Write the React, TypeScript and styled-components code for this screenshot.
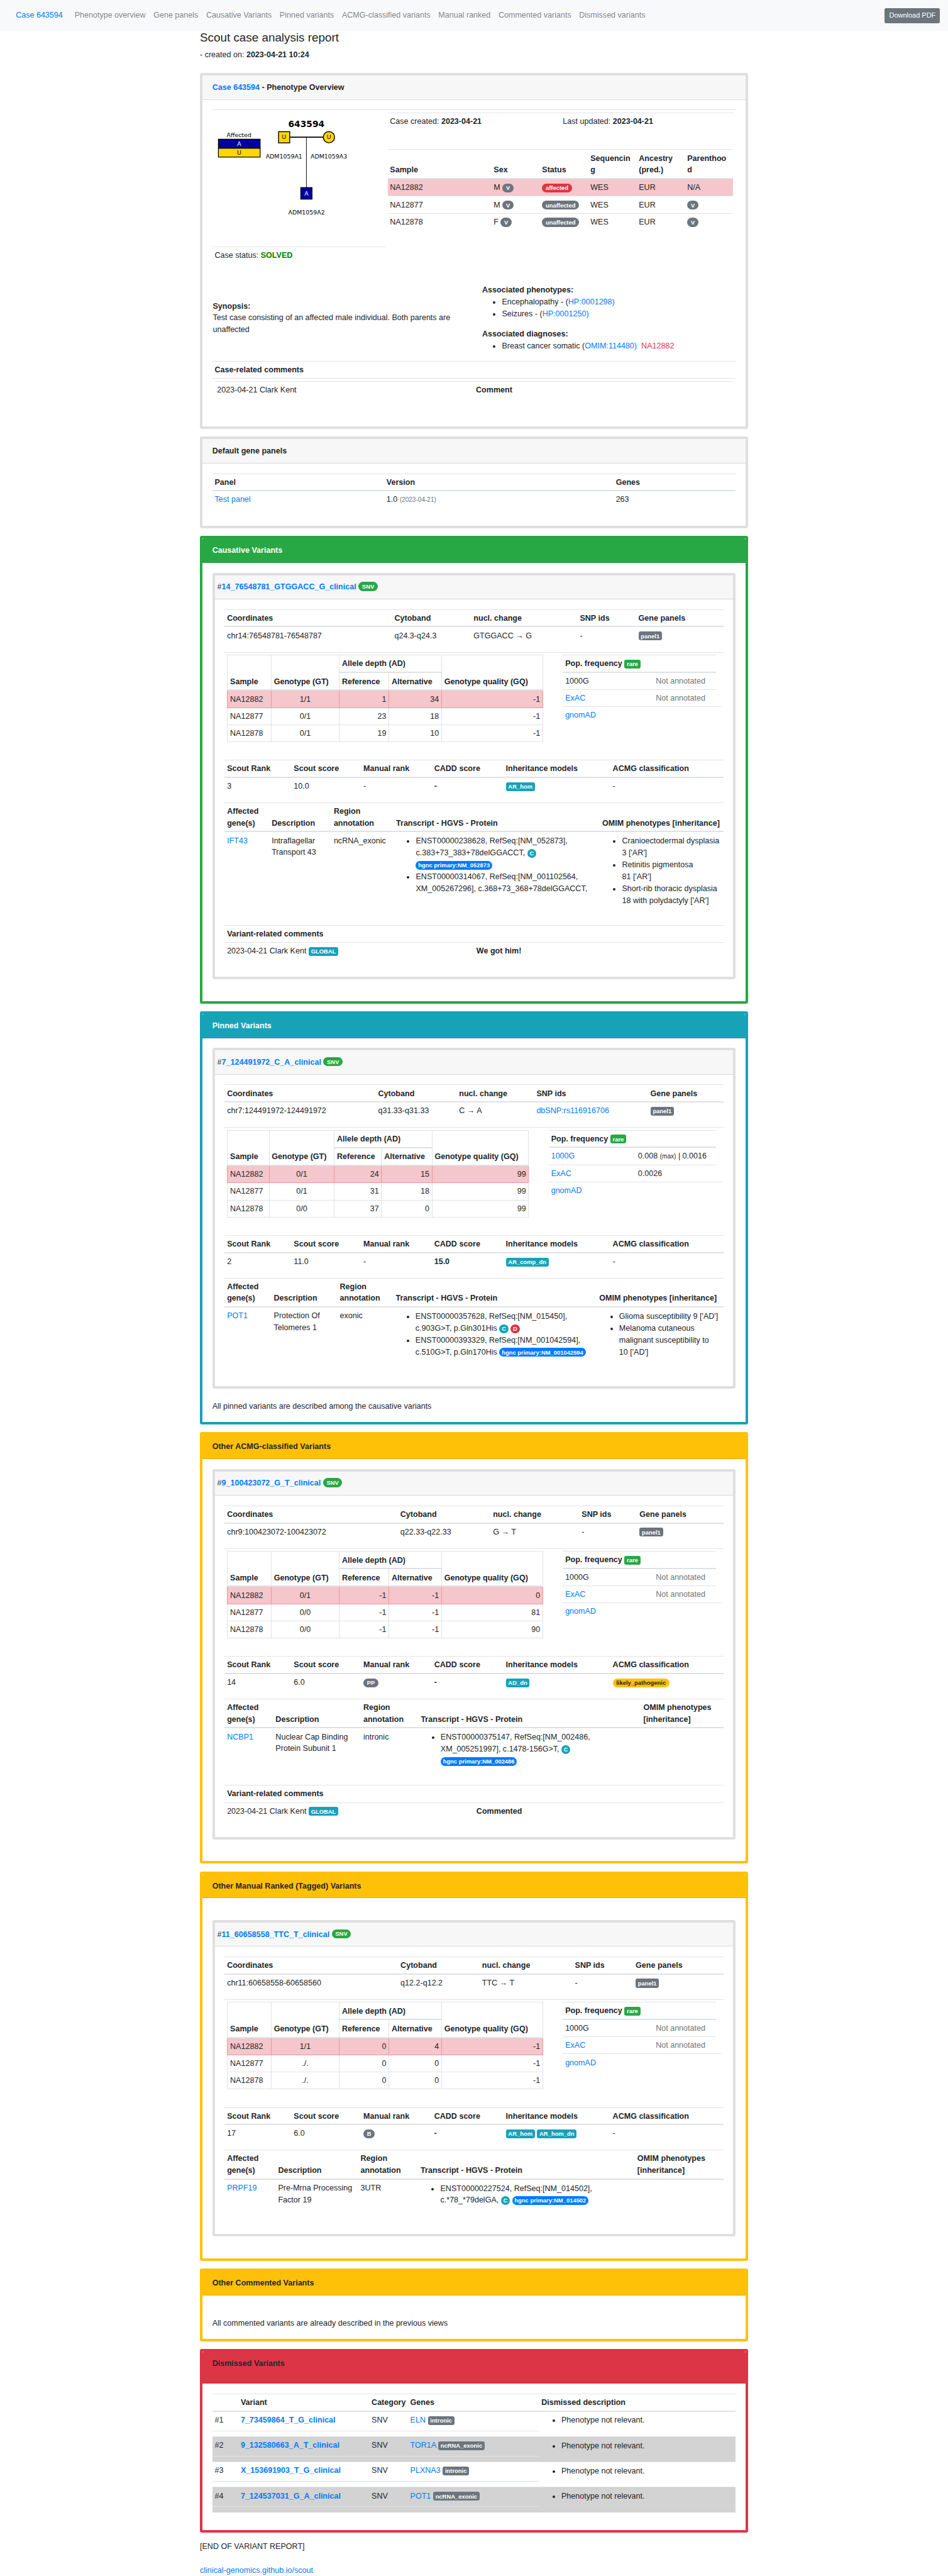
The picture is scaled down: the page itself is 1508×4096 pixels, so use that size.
import React from "react";
import styled, { createGlobalStyle, css } from "styled-components";

const GlobalStyle = createGlobalStyle`
  *, *::before, *::after { box-sizing: border-box; }
  html, body { margin: 0; padding: 0; background: #fff; }
`;

const LINE = "#dee2e6";
const COLORS = {
  primary: "#007bff",
  secondary: "#6c757d",
  success: "#28a745",
  danger: "#dc3545",
  warning: "#ffc107",
  info: "#17a2b8",
};
type Tone = keyof typeof COLORS;

const Page = styled.div`
  zoom: 0.7856;
  width: 1919.5px;
  height: 5213.8px;
  overflow: hidden;
  background: #fff;
  color: #212529;
  font-family: "Liberation Sans", Arial, sans-serif;
  font-size: 16px;
  line-height: 24px;
`;

const Navbar = styled.nav`
  display: flex;
  align-items: center;
  height: 63px;
  padding: 0 16px 0 32px;
  background: #f8f9fa;
  white-space: nowrap;
`;
const Brand = styled.a`
  color: ${COLORS.primary};
  margin-right: 24px;
`;
const NavLinks = styled.div`
  display: flex;
  flex: 1;
  gap: 16px;
  color: rgba(0, 0, 0, 0.5);
`;
const DownloadButton = styled.button`
  height: 31px;
  padding: 0 9px;
  border: 0;
  border-radius: 3.2px;
  background: ${COLORS.secondary};
  color: #fff;
  font: 14px/21px "Liberation Sans", Arial, sans-serif;
`;

const Container = styled.main`
  width: 1110px;
  margin: 0 auto;
`;
const Title = styled.h4`
  margin: 0;
  height: 36.8px;
  font-size: 24px;
  font-weight: 400;
  line-height: 28.8px;
`;
const Created = styled.div`
  height: 48.2px;
`;

const Card = styled.section<{ $height: number; $color?: string }>`
  height: ${(p) => p.$height}px;
  margin-bottom: 16px;
  border: 5.1px solid ${(p) => p.$color ?? "#dfdfdf"};
  border-radius: 4px;
  background: #fff;
`;
const CardHeader = styled.header<{ $bg?: string; $fg?: string; $tall?: boolean }>`
  height: ${(p) => (p.$tall ? 65 : 49)}px;
  padding: 12.5px 20px 0;
  border-bottom: 1px solid ${(p) => (p.$bg ? "rgba(0,0,0,.125)" : "#d8d8d8")};
  border-radius: 3px 3px 0 0;
  background: ${(p) => p.$bg ?? "#f7f7f7"};
  color: ${(p) => p.$fg ?? "inherit"};
  font-weight: 700;
  white-space: nowrap;
`;
const CardBody = styled.div<{ $top?: number }>`
  padding: ${(p) => p.$top ?? 20}px 20px 0;
`;
const VariantCard = styled.article<{ $height: number }>`
  height: ${(p) => p.$height}px;
  border: 5.1px solid #dfdfdf;
  border-radius: 4px;
`;
const VariantHeader = styled(CardHeader)`
  padding: 12.5px 5px 0;
  font-weight: 400;
`;

const Link = styled.a<{ $bold?: boolean }>`
  color: ${COLORS.primary};
  font-weight: ${(p) => (p.$bold ? 700 : "inherit")};
`;
const Muted = styled.span`
  color: ${COLORS.secondary};
`;
const Small = styled.small`
  font-size: 12.8px;
`;
const MutedSmall = styled(Small)`
  color: ${COLORS.secondary};
`;
const Danger = styled.span`
  margin-left: 9px;
  color: ${COLORS.danger};
`;
const Solved = styled.b`
  color: #008000;
`;

const Badge = styled.span<{ $tone: Tone; $shape?: "pill" | "round"; $raised?: boolean }>`
  display: inline-block;
  height: 18px;
  padding: 3px 4.8px;
  border-radius: 4px;
  background: ${(p) => COLORS[p.$tone]};
  color: ${(p) => (p.$tone === "warning" ? "#212529" : "#fff")};
  font-size: 12px;
  font-weight: 700;
  line-height: 12px;
  ${(p) => p.$shape && css`border-radius: 20px;`}
  ${(p) => p.$shape === "pill" && css`padding: 3px 7.2px;`}
  ${(p) => p.$raised && css`vertical-align: 2px;`}
`;

const Section = styled.div<{ $height: number }>`
  height: ${(p) => p.$height}px;
`;
const HeadRow = styled.div<{ $cols: string; $tall?: boolean }>`
  display: grid;
  grid-template-columns: ${(p) => p.$cols};
  align-items: end;
  height: ${(p) => (p.$tall ? 60.6 : 36.6)}px;
  padding-bottom: 3.6px;
  border-top: 1px solid ${LINE};
  border-bottom: 2.6px solid ${LINE};
  font-weight: 700;
`;
const Row = styled.div<{ $cols?: string; $ruled?: boolean; $pink?: boolean; $width?: number }>`
  display: grid;
  grid-template-columns: ${(p) => p.$cols ?? "1fr"};
  width: ${(p) => (p.$width ? p.$width + "px" : "auto")};
  min-height: ${(p) => (p.$ruled ? 34.6 : 33.6)}px;
  padding-top: 5.2px;
  border-top: ${(p) => (p.$ruled ? `1px solid ${LINE}` : "0")};
  background: ${(p) => (p.$pink ? "#f5c6cb" : "transparent")};
`;
const Cell = styled.div`
  padding: 0 4.8px;
  white-space: nowrap;
`;
const Bullets = styled.ul`
  margin: 1px 0 0;
  padding-left: 40px;
`;

/* ---------- phenotype overview ---------- */
const Overview = styled.div`
  display: flex;
  gap: 5px;
  height: 352.8px;
  border-top: 1px solid ${LINE};
`;
const OverviewLeft = styled.div`
  width: 350px;
`;
const Pedigree = styled.svg`
  display: block;
  width: 350px;
  height: 276px;
  font-family: "DejaVu Sans", sans-serif;
  font-size: 12px;
`;
const OverviewRight = styled.div`
  width: 700px;
  padding-top: 5px;
`;
const DatesRow = styled(Row)`
  height: 74px;
`;
const Findings = styled.div`
  display: grid;
  grid-template-columns: 545.6px 1fr;
  height: 155.2px;
  padding-left: 1px;
`;
const Synopsis = styled.div`
  padding: 33px 30px 0 0;
`;
const Phenotypes = styled.div`
  height: 89px;
`;
const CommentHead = styled(Row)`
  height: 35px;
`;
const CommentInset = styled.div`
  padding: 5px 5px 0;
  border-top: 1px solid ${LINE};
`;

/* ---------- variant block ---------- */
const DepthArea = styled.div`
  display: flex;
  gap: 40px;
  align-items: flex-start;
  height: 218.4px;
  padding: 4px 0 0 5px;
  border-top: 1px solid ${LINE};
`;
const DepthGrid = styled.div<{ $cols: string }>`
  display: grid;
  grid-template-columns: ${(p) => p.$cols};
  grid-template-rows: 36px 36px 34.6px 34.6px 34.4px;
  border-top: 1px solid ${LINE};
  border-left: 1px solid ${LINE};
`;
const DepthHead = styled.div<{ $span?: boolean; $wide?: boolean }>`
  display: flex;
  align-items: flex-end;
  padding: 0 0 3.6px 4.8px;
  border-right: 1px solid ${LINE};
  border-bottom: 2.6px solid ${LINE};
  font-weight: 700;
  white-space: nowrap;
  ${(p) => p.$span && css`grid-row: span 2;`}
  ${(p) => p.$wide && css`grid-column: span 2;`}
`;
const DepthCell = styled.div<{ $pink: boolean; $align: string; $first?: boolean }>`
  padding: 5.2px 4.8px 0;
  border: 0 solid ${(p) => (p.$pink ? "#ed969e" : LINE)};
  border-width: 0 1px 1px 0;
  background: ${(p) => (p.$pink ? "#f5c6cb" : "transparent")};
  text-align: ${(p) => p.$align};
  ${(p) =>
    p.$first &&
    css`
      margin-left: -1.3px;
      border-left-width: 1px;
    `}
`;
const Frequencies = styled.div<{ $width: number }>`
  width: ${(p) => p.$width}px;
`;

const Note = styled.p<{ $top: number }>`
  margin: 0;
  padding-top: ${(p) => p.$top}px;
`;

/* ---------- dismissed ---------- */
const DismissedRow = styled.div<{ $shaded: boolean; $first: boolean }>`
  display: grid;
  grid-template-columns: 662px 1fr;
  height: ${(p) => (p.$first ? 50.2 : 51)}px;
  border-top: ${(p) => (p.$first ? "0" : `1px solid ${LINE}`)};
  background: ${(p) => (p.$shaded ? "#d3d3d3" : "transparent")};
`;
const DismissedMain = styled.div`
  display: grid;
  grid-template-columns: 52.8px 265px 78.3px 1fr;
  height: 39px;
  padding-top: 5.2px;
  border-bottom: 1px solid ${LINE};
`;
const DismissedReason = styled.div`
  padding: 4.6px 0 0 4.8px;
`;
const Footer = styled.footer`
  display: flex;
  flex-direction: column;
  gap: 24px;
  padding-top: 0.8px;
`;

type Transcript = React.ReactNode[];
interface Variant {
  name: string;
  coordCols: string;
  coords: React.ReactNode[];
  depthCols: string;
  depth: string[][];
  popWidth: number;
  popCols: string;
  pops: [React.ReactNode, React.ReactNode][];
  ranks: React.ReactNode[];
  geneCols: string;
  gene: string;
  description: string[];
  region: string;
  transcripts: Transcript[];
  omimHead: string[];
  omim: string[][];
  geneHeight: number;
  comment?: string;
}

const rankCols = "135.2px 140.9px 143.4px 145px 216.4px 1fr";
const panel = <Badge $tone="secondary">panel1</Badge>;
const canonical = <Badge $tone="info" $shape="round">C</Badge>;
const primary = (id: string) => (
  <Badge $tone="primary" $shape="round">hgnc primary:{id}</Badge>
);
const missing = <Muted>Not annotated</Muted>;
const commonDepth = "88.6px 137.8px 100.6px 106.6px 205px";
const commonPops: [React.ReactNode, React.ReactNode][] = [
  ["1000G", missing],
  [<Link>ExAC</Link>, missing],
];

const causative: Variant = {
  name: "14_76548781_GTGGACC_G_clinical",
  coordCols: "339px 160.2px 215.3px 118.6px 1fr",
  coords: ["chr14:76548781-76548787", "q24.3-q24.3", "GTGGACC → G", "-", panel],
  depthCols: commonDepth,
  depth: [
    ["NA12882", "1/1", "1", "34", "-1"],
    ["NA12877", "0/1", "23", "18", "-1"],
    ["NA12878", "0/1", "19", "10", "-1"],
  ],
  popWidth: 310,
  popCols: "183.3px 1fr",
  pops: commonPops,
  ranks: ["3", "10.0", "-", <b>-</b>, <Badge $tone="info">AR_hom</Badge>, "-"],
  geneCols: "90.4px 125.7px 126.2px 417.5px 1fr",
  gene: "IFT43",
  description: ["Intraflagellar", "Transport 43"],
  region: "ncRNA_exonic",
  transcripts: [
    [
      "ENST00000238628, RefSeq:[NM_052873],",
      <>c.383+73_383+78delGGACCT, {canonical}</>,
      primary("NM_052873"),
    ],
    ["ENST00000314067, RefSeq:[NM_001102564,", "XM_005267296], c.368+73_368+78delGGACCT,"],
  ],
  omimHead: ["OMIM phenotypes [inheritance]"],
  omim: [
    ["Cranioectodermal dysplasia", "3 ['AR']"],
    ["Retinitis pigmentosa", "81 ['AR']"],
    ["Short-rib thoracic dysplasia", "18 with polydactyly ['AR']"],
  ],
  geneHeight: 248,
  comment: "We got him!",
};

const pinned: Variant = {
  name: "7_124491972_C_A_clinical",
  coordCols: "305.9px 164px 156.7px 230.7px 1fr",
  coords: [
    "chr7:124491972-124491972",
    "q31.33-q31.33",
    "C → A",
    <Link>dbSNP:rs116916706</Link>,
    panel,
  ],
  depthCols: "84.3px 132.1px 95.7px 102.2px 195.7px",
  depth: [
    ["NA12882", "0/1", "24", "15", "99"],
    ["NA12877", "0/1", "31", "18", "99"],
    ["NA12878", "0/0", "37", "0", "99"],
  ],
  popWidth: 339.3,
  popCols: "175.9px 1fr",
  pops: [
    [<Link>1000G</Link>, <>0.008 <Small>(max)</Small> | 0.0016</>],
    [<Link>ExAC</Link>, "0.0026"],
  ],
  ranks: ["2", "11.0", "-", <b>15.0</b>, <Badge $tone="info">AR_comp_dn</Badge>, "-"],
  geneCols: "94.7px 133.6px 113.2px 412.3px 1fr",
  gene: "POT1",
  description: ["Protection Of", "Telomeres 1"],
  region: "exonic",
  transcripts: [
    [
      "ENST00000357628, RefSeq:[NM_015450],",
      <>c.903G&gt;T, p.Gln301His {canonical} <Badge $tone="danger" $shape="round">D</Badge></>,
    ],
    [
      "ENST00000393329, RefSeq:[NM_001042594],",
      <>c.510G&gt;T, p.Gln170His {primary("NM_001042594")}</>,
    ],
  ],
  omimHead: ["OMIM phenotypes [inheritance]"],
  omim: [
    ["Glioma susceptibility 9 ['AD']"],
    ["Melanoma cutaneous", "malignant susceptibility to", "10 ['AD']"],
  ],
  geneHeight: 219,
};

const classified: Variant = {
  name: "9_100423072_G_T_clinical",
  coordCols: "350.9px 187.6px 179.6px 117.1px 1fr",
  coords: ["chr9:100423072-100423072", "q22.33-q22.33", "G → T", "-", panel],
  depthCols: commonDepth,
  depth: [
    ["NA12882", "0/1", "-1", "-1", "0"],
    ["NA12877", "0/0", "-1", "-1", "81"],
    ["NA12878", "0/0", "-1", "-1", "90"],
  ],
  popWidth: 310,
  popCols: "183.3px 1fr",
  pops: commonPops,
  ranks: [
    "14",
    "6.0",
    <Badge $tone="secondary" $shape="pill">PP</Badge>,
    <b>-</b>,
    <Badge $tone="info">AD_dn</Badge>,
    <Badge $tone="warning" $shape="pill">likely_pathogenic</Badge>,
  ],
  geneCols: "98.3px 177.7px 116.4px 450.7px 1fr",
  gene: "NCBP1",
  description: ["Nuclear Cap Binding", "Protein Subunit 1"],
  region: "intronic",
  transcripts: [
    [
      "ENST00000375147, RefSeq:[NM_002486,",
      <>XM_005251997], c.1478-156G&gt;T, {canonical}</>,
      primary("NM_002486"),
    ],
  ],
  omimHead: ["OMIM phenotypes", "[inheritance]"],
  omim: [],
  geneHeight: 175,
  comment: "Commented",
};

const ranked: Variant = {
  name: "11_60658558_TTC_T_clinical",
  coordCols: "351.3px 165px 188.2px 122.8px 1fr",
  coords: ["chr11:60658558-60658560", "q12.2-q12.2", "TTC → T", "-", panel],
  depthCols: commonDepth,
  depth: [
    ["NA12882", "1/1", "0", "4", "-1"],
    ["NA12877", "./.", "0", "0", "-1"],
    ["NA12878", "./.", "0", "0", "-1"],
  ],
  popWidth: 310,
  popCols: "183.3px 1fr",
  pops: commonPops,
  ranks: [
    "17",
    "6.0",
    <Badge $tone="secondary" $shape="pill">B</Badge>,
    <b>-</b>,
    <>
      <Badge $tone="info">AR_hom</Badge> <Badge $tone="info">AR_hom_dn</Badge>
    </>,
    "-",
  ],
  geneCols: "103.5px 166.9px 121.6px 438.9px 1fr",
  gene: "PRPF19",
  description: ["Pre-Mrna Processing", "Factor 19"],
  region: "3UTR",
  transcripts: [
    [
      "ENST00000227524, RefSeq:[NM_014502],",
      <>c.*78_*79delGA, {canonical} {primary("NM_014502")}</>,
    ],
  ],
  omimHead: ["OMIM phenotypes", "[inheritance]"],
  omim: [],
  geneHeight: 171,
};

const Lines = ({ items }: { items: React.ReactNode[] }) => (
  <>
    {items.map((item, i) => (
      <React.Fragment key={i}>
        {i > 0 && <br />}
        {item}
      </React.Fragment>
    ))}
  </>
);

const Cells = ({ items }: { items: React.ReactNode[] }) => (
  <>
    {items.map((item, i) => (
      <Cell key={i}>{item}</Cell>
    ))}
  </>
);

const aligns = ["left", "center", "right", "right", "right"];

function VariantBlock({ v }: { v: Variant }) {
  return (
    <VariantCard $height={470 + v.geneHeight + (v.comment ? 105 : 0)}>
      <VariantHeader>
        #<Link $bold>{v.name}</Link> <Badge $tone="success" $shape="pill" $raised>SNV</Badge>
      </VariantHeader>
      <CardBody>
        <Section $height={86.6}>
          <HeadRow $cols={v.coordCols}>
            <Cells items={["Coordinates", "Cytoband", "nucl. change", "SNP ids", "Gene panels"]} />
          </HeadRow>
          <Row $cols={v.coordCols}>
            <Cells items={v.coords} />
          </Row>
        </Section>
        <DepthArea>
          <DepthGrid $cols={v.depthCols}>
            <DepthHead $span>Sample</DepthHead>
            <DepthHead $span>Genotype (GT)</DepthHead>
            <DepthHead $wide>Allele depth (AD)</DepthHead>
            <DepthHead $span>Genotype quality (GQ)</DepthHead>
            <DepthHead>Reference</DepthHead>
            <DepthHead>Alternative</DepthHead>
            {v.depth.map((row, r) =>
              row.map((value, c) => (
                <DepthCell key={`${r}-${c}`} $pink={r === 0} $align={aligns[c]} $first={c === 0}>
                  {value}
                </DepthCell>
              ))
            )}
          </DepthGrid>
          <Frequencies $width={v.popWidth}>
            <HeadRow $cols="1fr">
              <Cell>
                Pop. frequency <Badge $tone="success">rare</Badge>
              </Cell>
            </HeadRow>
            {v.pops.map((pop, i) => (
              <Row key={i} $cols={v.popCols} $ruled={i > 0}>
                <Cells items={pop} />
              </Row>
            ))}
            <Row $ruled $width={v.popWidth + 10.5}>
              <Cell>
                <Link>gnomAD</Link>
              </Cell>
            </Row>
          </Frequencies>
        </DepthArea>
        <Section $height={86}>
          <HeadRow $cols={rankCols}>
            <Cells
              items={[
                "Scout Rank",
                "Scout score",
                "Manual rank",
                "CADD score",
                "Inheritance models",
                "ACMG classification",
              ]}
            />
          </HeadRow>
          <Row $cols={rankCols}>
            <Cells items={v.ranks} />
          </Row>
        </Section>
        <Section $height={v.geneHeight}>
          <HeadRow $cols={v.geneCols} $tall>
            <Cells
              items={[
                <Lines items={["Affected", "gene(s)"]} />,
                "Description",
                <Lines items={["Region", "annotation"]} />,
                "Transcript - HGVS - Protein",
                <Lines items={v.omimHead} />,
              ]}
            />
          </HeadRow>
          <Row $cols={v.geneCols}>
            <Cells
              items={[
                <Link>{v.gene}</Link>,
                <Lines items={v.description} />,
                v.region,
                <Bullets>
                  {v.transcripts.map((t, i) => (
                    <li key={i}>
                      <Lines items={t} />
                    </li>
                  ))}
                </Bullets>,
                <Bullets>
                  {v.omim.map((o, i) => (
                    <li key={i}>
                      <Lines items={o} />
                    </li>
                  ))}
                </Bullets>,
              ]}
            />
          </Row>
        </Section>
        {v.comment && (
          <>
            <Row $ruled>
              <Cell>
                <b>Variant-related comments</b>
              </Cell>
            </Row>
            <Row $ruled $cols="505px 1fr">
              <Cell>
                2023-04-21 Clark Kent <Badge $tone="info">GLOBAL</Badge>
              </Cell>
              <Cell>
                <b>{v.comment}</b>
              </Cell>
            </Row>
          </>
        )}
      </CardBody>
    </VariantCard>
  );
}

const PedigreeChart = () => (
  <Pedigree viewBox="430 223 350 276">
    <text x="583.4" y="257.8" fontSize="17.6" fontWeight="700">643594</text>
    <text x="458.6" y="277.8">Affected</text>
    <rect x="442" y="282" width="84.5" height="18" fill="#0000a0" stroke="#000" strokeWidth="1.6" />
    <rect x="442" y="300.4" width="84.5" height="17.8" fill="#ffd700" stroke="#000" strokeWidth="1.6" />
    <text x="484" y="295.8" textAnchor="middle" fill="#fff">A</text>
    <text x="484" y="313.8" textAnchor="middle">U</text>
    <path d="M587 278H654" stroke="#000" strokeWidth="2.2" />
    <path d="M620.2 278V380" stroke="#000" strokeWidth="1.2" />
    <rect x="563.8" y="266.8" width="22.6" height="22.6" fill="#ffd700" stroke="#000" strokeWidth="1.8" />
    <circle cx="665.8" cy="278" r="11.4" fill="#ffd700" stroke="#000" strokeWidth="1.8" />
    <text x="574.8" y="282.2" textAnchor="middle">U</text>
    <text x="665.8" y="282.2" textAnchor="middle">U</text>
    <text x="537.8" y="321">ADM1059A1</text>
    <text x="628.6" y="321">ADM1059A3</text>
    <rect x="608.9" y="380" width="22.6" height="23.2" fill="#0000a0" stroke="#000" strokeWidth="1.8" />
    <text x="620.2" y="395.8" textAnchor="middle" fill="#fff">A</text>
    <text x="583.5" y="434">ADM1059A2</text>
  </Pedigree>
);

const sampleCols = "210px 98px 98px 98px 98px 98px";
const verified = <Badge $tone="secondary" $shape="pill">V</Badge>;
const samples: React.ReactNode[][] = [
  ["NA12882", <>M {verified}</>, <Badge $tone="danger" $shape="pill">affected</Badge>, "WES", "EUR", "N/A"],
  ["NA12877", <>M {verified}</>, <Badge $tone="secondary" $shape="pill">unaffected</Badge>, "WES", "EUR", verified],
  ["NA12878", <>F {verified}</>, <Badge $tone="secondary" $shape="pill">unaffected</Badge>, "WES", "EUR", verified],
];

const dismissed = [
  ["#1", "7_73459864_T_G_clinical", "ELN", "intronic"],
  ["#2", "9_132580663_A_T_clinical", "TOR1A", "ncRNA_exonic"],
  ["#3", "X_153691903_T_G_clinical", "PLXNA3", "intronic"],
  ["#4", "7_124537031_G_A_clinical", "POT1", "ncRNA_exonic"],
];

const navItems = [
  "Phenotype overview",
  "Gene panels",
  "Causative Variants",
  "Pinned variants",
  "ACMG-classified variants",
  "Manual ranked",
  "Commented variants",
  "Dismissed variants",
];

export default function App() {
  return (
    <>
      <GlobalStyle />
      <Page>
        <Navbar>
          <Brand>Case 643594</Brand>
          <NavLinks>
            {navItems.map((n) => (
              <span key={n}>{n}</span>
            ))}
          </NavLinks>
          <DownloadButton>Download PDF</DownloadButton>
        </Navbar>
        <Container>
          <Title>Scout case analysis report</Title>
          <Created>
            - created on: <b>2023-04-21 10:24</b>
          </Created>

          <Card $height={720}>
            <CardHeader>
              <Link>Case 643594</Link> - Phenotype Overview
            </CardHeader>
            <CardBody>
              <Overview>
                <OverviewLeft>
                  <PedigreeChart />
                  <Row $ruled>
                    <Cell>
                      Case status: <Solved>SOLVED</Solved>
                    </Cell>
                  </Row>
                </OverviewLeft>
                <OverviewRight>
                  <DatesRow $ruled $cols="1fr 1fr">
                    <Cell>
                      Case created: <b>2023-04-21</b>
                    </Cell>
                    <Cell>
                      Last updated: <b>2023-04-21</b>
                    </Cell>
                  </DatesRow>
                  <HeadRow $cols={sampleCols} $tall>
                    <Cells
                      items={[
                        "Sample",
                        "Sex",
                        "Status",
                        <Lines items={["Sequencin", "g"]} />,
                        <Lines items={["Ancestry", "(pred.)"]} />,
                        <Lines items={["Parenthoo", "d"]} />,
                      ]}
                    />
                  </HeadRow>
                  {samples.map((s, i) => (
                    <Row key={i} $cols={sampleCols} $ruled={i > 0} $pink={i === 0}>
                      <Cells items={s} />
                    </Row>
                  ))}
                </OverviewRight>
              </Overview>
              <Findings>
                <Synopsis>
                  <b>Synopsis:</b>
                  <br />
                  Test case consisting of an affected male individual. Both parents are unaffected
                </Synopsis>
                <div>
                  <Phenotypes>
                    <b>Associated phenotypes:</b>
                    <Bullets>
                      <li>
                        Encephalopathy - (<Link>HP:0001298)</Link>
                      </li>
                      <li>
                        Seizures - (<Link>HP:0001250)</Link>
                      </li>
                    </Bullets>
                  </Phenotypes>
                  <b>Associated diagnoses:</b>
                  <Bullets>
                    <li>
                      Breast cancer somatic (<Link>OMIM:114480)</Link>
                      <Danger>NA12882</Danger>
                    </li>
                  </Bullets>
                </div>
              </Findings>
              <CommentHead $ruled>
                <Cell>
                  <b>Case-related comments</b>
                </Cell>
              </CommentHead>
              <CommentInset>
                <Row $ruled $cols="524px 1fr">
                  <Cell>2023-04-21 Clark Kent</Cell>
                  <Cell>
                    <b>Comment</b>
                  </Cell>
                </Row>
              </CommentInset>
            </CardBody>
          </Card>

          <Card $height={185}>
            <CardHeader>Default gene panels</CardHeader>
            <CardBody>
              <HeadRow $cols="348px 464.4px 1fr">
                <Cells items={["Panel", "Version", "Genes"]} />
              </HeadRow>
              <Row $cols="348px 464.4px 1fr">
                <Cells
                  items={[
                    <Link>Test panel</Link>,
                    <>1.0 <MutedSmall>(2023-04-21)</MutedSmall></>,
                    "263",
                  ]}
                />
              </Row>
            </CardBody>
          </Card>

          <Card $height={946} $color={COLORS.success}>
            <CardHeader $bg={COLORS.success} $fg="#fff">Causative Variants</CardHeader>
            <CardBody>
              <VariantBlock v={causative} />
            </CardBody>
          </Card>

          <Card $height={836} $color={COLORS.info}>
            <CardHeader $bg={COLORS.info} $fg="#fff">Pinned Variants</CardHeader>
            <CardBody>
              <VariantBlock v={pinned} />
              <Note $top={25}>All pinned variants are described among the causative variants</Note>
            </CardBody>
          </Card>

          <Card $height={873} $color={COLORS.warning}>
            <CardHeader $bg={COLORS.warning}>Other ACMG-classified Variants</CardHeader>
            <CardBody>
              <VariantBlock v={classified} />
            </CardBody>
          </Card>

          <Card $height={788} $color={COLORS.warning}>
            <CardHeader $bg={COLORS.warning}>Other Manual Ranked (Tagged) Variants</CardHeader>
            <CardBody $top={44}>
              <VariantBlock v={ranked} />
            </CardBody>
          </Card>

          <Card $height={147} $color={COLORS.warning}>
            <CardHeader $bg={COLORS.warning}>Other Commented Variants</CardHeader>
            <CardBody>
              <Note $top={25}>All commented variants are already described in the previous views</Note>
            </CardBody>
          </Card>

          <Card $height={371} $color={COLORS.danger}>
            <CardHeader $bg={COLORS.danger} $tall>Dismissed Variants</CardHeader>
            <CardBody>
              <HeadRow $cols="52.8px 265px 78.3px 265.5px 1fr">
                <Cells items={["", "Variant", "Category", "Genes", "Dismissed description"]} />
              </HeadRow>
              {dismissed.map(([n, name, gene, region], i) => (
                <DismissedRow key={n} $shaded={i % 2 === 1} $first={i === 0}>
                  <DismissedMain>
                    <Cells
                      items={[
                        n,
                        <Link $bold>{name}</Link>,
                        "SNV",
                        <><Link>{gene}</Link> <Badge $tone="secondary">{region}</Badge></>,
                      ]}
                    />
                  </DismissedMain>
                  <DismissedReason>
                    <Bullets>
                      <li>Phenotype not relevant.</li>
                    </Bullets>
                  </DismissedReason>
                </DismissedRow>
              ))}
            </CardBody>
          </Card>

          <Footer>
            <span>[END OF VARIANT REPORT]</span>
            <Link>clinical-genomics.github.io/scout</Link>
          </Footer>
        </Container>
      </Page>
    </>
  );
}
